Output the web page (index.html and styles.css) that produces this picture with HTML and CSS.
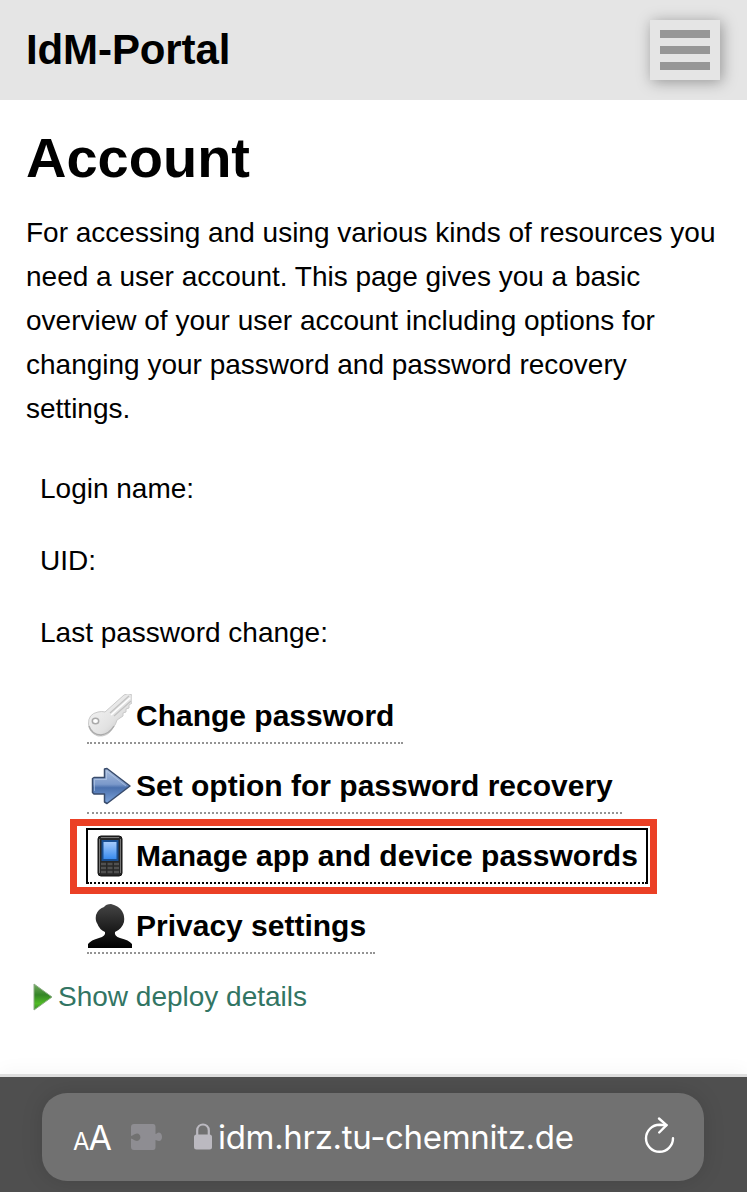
FILE: index.html
```html
<!DOCTYPE html>
<html lang="en">
<head>
<meta charset="utf-8">
<title>IdM-Portal</title>
<link rel="stylesheet" href="styles.css">
</head>
<body>
<div class="screen">
  <header class="header">
    <div class="brand">IdM-Portal</div>
    <button class="menu" aria-label="Menu"><span></span><span></span><span></span></button>
  </header>
  <main class="main">
    <h1 class="title">Account</h1>
    <p class="intro">For accessing and using various kinds of resources you need a user account. This page gives you a basic overview of your user account including options for changing your password and password recovery settings.</p>
    <div class="fields">
      <div>Login name:</div>
      <div>UID:</div>
      <div>Last password change:</div>
    </div>
    <div class="links">
      <a class="link"><svg class="icon" viewBox="0 0 44 44">
        <defs><linearGradient id="key" x1="0" y1="0" x2="1" y2="1"><stop stop-color="#fafafa"/><stop offset=".6" stop-color="#e2e2e2"/><stop offset="1" stop-color="#b5b5b5"/></linearGradient></defs>
        <path d="M17 18 36 1Q40-2 44 1V9L41 11V14L38 15V18L35 19V22L29 26Q28 30 25 34Q20 43 10 42Q1 39 .5 30Q0 20 10 18Q14 17 17 18Z" fill="url(#key)" stroke="#cacaca"/>
        <path d="M22 19 41 2M26 22 43 7" stroke="#c2c2c2" stroke-width="1.2" fill="none"/><path d="M23 21 42 4" stroke="#fff" stroke-width="1.5"/>
        <path d="M1 32Q4 41 13 41Q21 40 26 32" stroke="#aaa" stroke-width="1.3" fill="none"/>
        <ellipse cx="7.500" cy="27" rx="3.200" ry="2.800" fill="#fff" stroke="#aaa" stroke-width="1.500"/></svg>Change password</a>
      <a class="link"><svg class="icon" viewBox="0 0 44 44">
        <defs><linearGradient id="arrow" x1="0" y1="0" x2="0" y2="1"><stop stop-color="#a9bddd"/><stop offset=".45" stop-color="#7b99ca"/><stop offset=".55" stop-color="#4a70ad"/><stop offset="1" stop-color="#7da4dc"/></linearGradient></defs>
        <path d="M4.500 14.500 6 13.500H16.500V5L19 4.500 42 22 19 39.500 16.500 38V30H6L4.500 28.500Z" fill="url(#arrow)" stroke="#384b6b" stroke-width="1.500" stroke-linejoin="round"/>
        <path d="M6.500 27V15.500H18.500V7L38 22" fill="none" stroke="#bdcee8" stroke-opacity=".6"/></svg>Set option for password recovery</a>
      <a class="link link-focus"><svg class="icon" viewBox="0 0 44 44">
        <defs><linearGradient id="screen" x1="0" y1="0" x2="0" y2="1"><stop stop-color="#a5cafa"/><stop offset="1" stop-color="#398bef"/></linearGradient></defs>
        <rect x="10" y="2" width="24" height="40" rx="3" fill="#272727" stroke="#111"/>
        <path d="M11.500 5V39M32.500 5V39M13 3.500H31" stroke="#777"/>
        <rect x="13.500" y="6" width="17" height="21" fill="#194e91"/><rect x="15.500" y="8" width="13" height="17" fill="url(#screen)"/>
        <path d="M13 30H31M13 34H31M13 38H31" stroke="#505050" stroke-width="2.500" stroke-dasharray="5 1.500"/></svg>Manage app and device passwords</a>
      <a class="link"><svg class="icon" viewBox="0 0 44 44">
        <defs><linearGradient id="person" x1="0" y1="0" x2="0" y2="1"><stop stop-color="#454545"/><stop offset=".65" stop-color="#171717"/><stop offset="1" stop-color="#000"/></linearGradient></defs>
        <path d="M0 44V40Q3 36 11 34Q18 32 17 28Q11 25 9.500 20Q7 17 8 11Q10 5 16 3Q18 0 23 0Q31 2 34 7Q37 12 36 18Q34 25 27 28Q26 32 32 34Q41 36 44 40V44Z" fill="url(#person)"/></svg>Privacy settings</a>
    </div>
    <a class="details"><svg class="play" viewBox="0 0 20 28">
      <defs><linearGradient id="play" x1="0" y1="0" x2="0" y2="1"><stop stop-color="#74aa62"/><stop offset=".42" stop-color="#348527"/><stop offset=".75" stop-color="#50bb25"/><stop offset="1" stop-color="#398b2a"/></linearGradient></defs>
      <path d="M1 1 19 14 1 27Z" fill="url(#play)" stroke="#8cad85" stroke-width="1" stroke-linejoin="round"/></svg>Show deploy details</a>
  </main>
  <footer class="toolbar">
    <div class="address">
      <div class="text-size"><span class="small-a">A</span><span>A</span></div>
      <svg class="puzzle" viewBox="0 0 31 26"><path d="M3 0H22Q24.500 0 24.500 3V10C26 10 26 8.500 28 8.500C32 9 32 17 28 17C26 17 26 16 24.500 16V23Q24.500 26 22 26H3Q0 26 0 23V14.500C2 14.500 3 17 6 17C11 16 10 9.500 6 9.500C3 9.500 2 12 0 12V3Q0 0 3 0Z" fill="#8e8d92"/></svg>
      <svg class="lock" viewBox="0 0 18 27"><path d="M3.200 13V7.500C3.200-.5 14.800-.5 14.800 7.500V13" fill="none" stroke="#bbb9c0" stroke-width="2.200"/><rect y="11.500" width="18" height="15" rx="2.500" fill="#bbb9c0"/></svg>
      <span class="url">idm.hrz.tu-chemnitz.de</span>
      <svg class="reload" viewBox="0 0 32 38"><path d="M23.500 9.200 16.500 8.800A13.500 13.500 0 1 0 30 22.300" fill="none" stroke="#fff" stroke-width="2.400" stroke-linecap="round"/><path d="M16 2.500 23.500 9.200 16.200 16.500" fill="none" stroke="#fff" stroke-width="2.400" stroke-linecap="round" stroke-linejoin="round"/></svg>
    </div>
  </footer>
</div>
</body>
</html>
```
FILE: styles.css
```css
* { box-sizing: border-box; }
body { margin: 0; background: #fff; color: #000; font-family: "Liberation Sans", Arial, sans-serif; font-size: 28px; line-height: 44px; }
.screen { height: 1192px; display: flex; flex-direction: column; overflow: hidden; }
.header { height: 100px; flex: none; background: #e5e5e5; padding: 0 27px 0 26px; display: flex; align-items: center; justify-content: space-between; }
.brand { font-size: 42px; font-weight: bold; letter-spacing: -0.1px; }
.menu { width: 70px; height: 60px; padding: 10px; border: 0; background: #e5e5e5; box-shadow: 2px 2px 14px rgba(0,0,0,.35); display: flex; flex-direction: column; gap: 8px; }
.menu span { width: 50px; height: 8px; background: #979797; }
.main { flex: 1; padding: 24px 26px 0; }
.title { margin: 0 0 19px; font-size: 56px; line-height: 68px; }
.intro { margin: 0; }
.fields { margin-top: 36px; padding-left: 14px; display: flex; flex-direction: column; gap: 28px; }
.links { margin: 35px 0 0 61px; display: flex; flex-direction: column; align-items: flex-start; gap: 16px; }
.link { height: 54px; padding: 0 9px 0 1px; border-bottom: 2px dotted #949494; display: flex; align-items: center; gap: 4px; font-size: 30px; font-weight: bold; white-space: nowrap; }
.icon { width: 44px; height: 44px; flex: none; }
.link-focus { position: relative; border-bottom-color: #000; }
.link-focus::before { content: ""; position: absolute; inset: -11px -10px -12px -17px; border: 7px solid #eb4025; }
.link-focus::after { content: ""; position: absolute; inset: -2px -1px -2px -1px; border: 2px solid #000; border-bottom: 0; }
.details { margin: 21px 0 0 7px; display: flex; align-items: center; gap: 5px; color: #327563; }
.play { width: 20px; height: 28px; }
.toolbar { height: 118px; flex: none; border-top: 3px solid #dedede; background: #4f4f4f; padding: 16px 43px 11px 42px; box-shadow: 0 -4px 18px rgba(0,0,0,.035); }
.address { height: 88px; border-radius: 25px; background: #717171; box-shadow: 0 0 22px rgba(0,0,0,.12); padding: 0 29px 0 31px; display: flex; align-items: center; color: #fff; font-family: Inter, sans-serif; }
.text-size { width: 40px; padding-top: 5px; display: flex; align-items: baseline; font-size: 34px; letter-spacing: -1px; }
.small-a { font-size: 24px; }
.puzzle { width: 31px; height: 26px; margin-left: 18px; }
.lock { width: 18px; height: 27px; margin: 0 0 2px 32px; }
.url { margin-left: 6px; font-size: 33px; letter-spacing: -0.31px; white-space: nowrap; }
.reload { width: 32px; height: 38px; margin: 0 0 4px auto; }
```
